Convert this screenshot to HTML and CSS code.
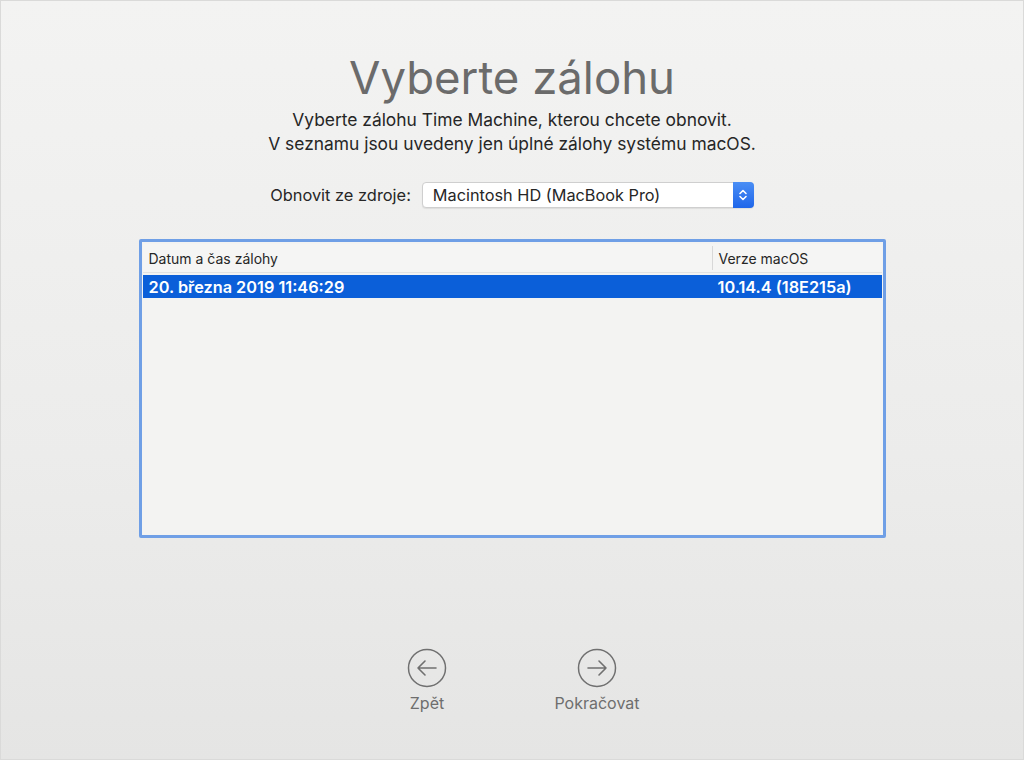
FILE: index.html
```html
<!DOCTYPE html>
<html lang="cs">
<head>
<meta charset="utf-8">
<link rel="stylesheet" href="styles.css">
</head>
<body>
<div class="screen">
  <h1 class="title">Vyberte zálohu</h1>
  <p class="subtitle">Vyberte zálohu Time Machine, kterou chcete obnovit.<br>V seznamu jsou uvedeny jen úplné zálohy systému macOS.</p>
  <div class="source">
    <span class="source-label">Obnovit ze zdroje:</span>
    <div class="select">
      <span class="select-text">Macintosh HD (MacBook Pro)</span>
      <span class="stepper">
        <svg width="10" height="14" viewBox="0 0 10 14"><path d="M2 5.5 L5 2.5 L8 5.5 M2 8.5 L5 11.5 L8 8.5" fill="none" stroke="#fff" stroke-width="1.6" stroke-linecap="round" stroke-linejoin="round"/></svg>
      </span>
    </div>
  </div>
  <div class="table">
    <div class="thead">
      <div class="col-date">Datum a čas zálohy</div>
      <div class="col-ver">Verze macOS</div>
    </div>
    <div class="row selected">
      <div class="col-date">20. března 2019 11:46:29</div>
      <div class="col-ver">10.14.4 (18E215a)</div>
    </div>
  </div>
  <div class="nav">
    <div class="nav-btn back">
      <svg width="40" height="40" viewBox="0 0 40 40"><circle cx="20" cy="20" r="18.5" fill="none" stroke="#707070" stroke-width="1.5"/><path d="M29 20 H11 M18 13 L11 20 L18 27" fill="none" stroke="#707070" stroke-width="1.6" stroke-linecap="round" stroke-linejoin="round"/></svg>
      <span>Zpět</span>
    </div>
    <div class="nav-btn next">
      <svg width="40" height="40" viewBox="0 0 40 40"><circle cx="20" cy="20" r="18.5" fill="none" stroke="#707070" stroke-width="1.5"/><path d="M11 20 H29 M22 13 L29 20 L22 27" fill="none" stroke="#707070" stroke-width="1.6" stroke-linecap="round" stroke-linejoin="round"/></svg>
      <span>Pokračovat</span>
    </div>
  </div>
</div>
</body>
</html>
```
FILE: styles.css
```css
html, body {
  margin: 0;
  padding: 0;
  width: 1024px;
  height: 760px;
  overflow: hidden;
}
body {
  font-family: Inter, "Liberation Sans", Arial, sans-serif;
  background: #e6e6e5;
}
.screen {
  box-sizing: border-box;
  width: 1024px;
  height: 760px;
  border: 1px solid #dadad9;
  background: linear-gradient(to bottom, #f3f3f2 0%, #ececeb 60%, #e5e5e4 100%);
  display: flex;
  flex-direction: column;
  align-items: center;
}
.title {
  margin: 47px 0 0 0;
  font-weight: normal;
  font-size: 45.5px;
  line-height: 60px;
  color: #6b6b6b;
}
.subtitle {
  margin: 0;
  text-align: center;
  font-size: 17.4px;
  line-height: 24px;
  color: #262626;
}
.source {
  margin-top: 26px;
  display: flex;
  align-items: center;
}
.source-label {
  font-size: 16.4px;
  color: #262626;
  margin-right: 11px;
}
.select {
  box-sizing: border-box;
  width: 332px;
  height: 26px;
  border: 1px solid #cfcfcf;
  border-radius: 4px;
  background: #fff;
  display: flex;
  align-items: center;
  box-shadow: 0 1px 1px rgba(0,0,0,0.08);
}
.select-text {
  flex: 1;
  padding-left: 10px;
  font-size: 16.3px;
  color: #262626;
}
.stepper {
  width: 21px;
  height: 26px;
  margin: -1px -1px -1px 0;
  border-radius: 0 4px 4px 0;
  background: linear-gradient(#4a8ef5, #1f66ea);
  display: flex;
  align-items: center;
  justify-content: center;
}
.table {
  box-sizing: border-box;
  margin-top: 31px;
  width: 747px;
  height: 299px;
  border: 3px solid #6f9fe6;
  border-radius: 2px;
  background: #f3f3f2;
  padding: 2px 1px;
}
.thead, .row {
  display: flex;
}
.thead {
  height: 28px;
  align-items: center;
  font-size: 14px;
  color: #262626;
  border-bottom: 1px solid #e2e2e2;
  background: #f5f5f4;
}
.thead .col-ver {
  border-left: 1px solid #d8d8d8;
  height: 24px;
  display: flex;
  align-items: center;
}
.col-date {
  width: 569px;
  padding-left: 6px;
  box-sizing: border-box;
}
.col-ver {
  flex: 1;
  padding-left: 6px;
  box-sizing: border-box;
}
.row {
  height: 23px;
  margin-top: 2px;
  align-items: center;
}
.row.selected {
  background: #0b5fd9;
  color: #fff;
  font-size: 16.3px;
  font-weight: 600;
}
.nav {
  margin-top: 110px;
  display: flex;
  gap: 80px;
}
.nav-btn {
  display: flex;
  flex-direction: column;
  align-items: center;
  width: 90px;
  color: #6e6e6e;
  font-size: 16px;
}
.nav-btn span {
  margin-top: 5px;
}
```
